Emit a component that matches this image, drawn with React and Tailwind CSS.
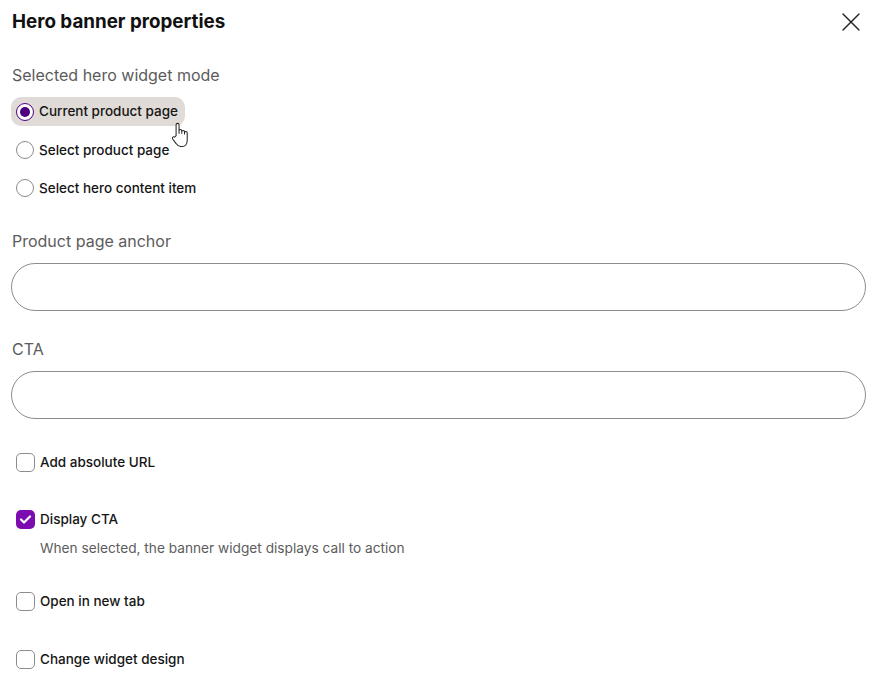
import { X } from 'lucide-react';

const font = "font-['Inter',sans-serif]";

function Radio({ label, checked, hovered }) {
  return (
    <div className="relative h-[38px] flex items-center">
      <div className={`flex items-center h-[29px] rounded-[10px] pl-[5px] pr-[7px] ${hovered ? 'bg-[#e0dbd7] mb-[1px]' : ''}`}>
        <span className={`w-[18px] h-[18px] rounded-full flex items-center justify-center border bg-white ${checked ? 'border-[#4d0080]' : 'border-[#8c8c8c]'}`}>
          {checked && <span className="w-[10px] h-[10px] rounded-full bg-[#4d0080]" />}
        </span>
        <span className="ml-[5px] text-[13.5px] font-medium text-[#151515]">{label}</span>
      </div>
      {hovered && (
        <svg className="absolute left-[159px] top-[29px]" width="19" height="25" viewBox="0 0 16 22" fill="white" stroke="#222" strokeWidth="0.9" strokeLinejoin="round">
          <path d="M5 12V2.5a1.3 1.3 0 0 1 2.6 0V10l0-2.2a1.2 1.2 0 0 1 2.4 0V10V8.6a1.2 1.2 0 0 1 2.4 0V10.5V9.6a1.2 1.2 0 0 1 2.4 0V16c0 3-1.6 5.5-4.5 5.5H9c-2 0-3-1-4-2.5L2 15c-.9-1.3.6-2.6 1.7-1.6z" />
        </svg>
      )}
    </div>
  );
}

function TextField({ label, className }) {
  return (
    <div className={className}>
      <div className="ml-[1px] text-[16px] leading-[18px] text-[#5c5c5c]">{label}</div>
      <input className="mt-[13px] block w-[855px] h-[48px] rounded-[24px] border border-[#8c8c8c] bg-white" />
    </div>
  );
}

function Check({ label, checked, hint, className }) {
  return (
    <div className={className}>
      <div className="flex items-center h-[20px]">
        {checked ? (
          <span className="w-[19px] h-[19px] rounded-[5px] bg-[#7c0bb0] flex items-center justify-center">
            <svg width="13" height="11" viewBox="0 0 13 11" fill="none" stroke="white" strokeWidth="2.2" strokeLinecap="round" strokeLinejoin="round">
              <path d="M2 5.5 5 8.5 11 2.5" />
            </svg>
          </span>
        ) : (
          <span className="w-[19px] h-[19px] rounded-[5px] border border-[#8c8c8c] bg-white" />
        )}
        <span className="ml-[5px] text-[13.5px] font-medium text-[#151515]">{label}</span>
      </div>
      {hint && <div className="ml-[24px] mt-[10px] text-[13.7px] leading-[18px] text-[#5c5c5c]">{hint}</div>}
    </div>
  );
}

export default function App() {
  return (
    <div className={`w-[875px] h-[682px] overflow-hidden bg-white pl-[11px] ${font}`}>
      <div className="flex items-center justify-between w-[855px] h-[44px]">
        <h2 className="ml-[1px] text-[18.8px] font-bold leading-[22px] text-[#111]">Hero banner properties</h2>
        <X className="w-[32px] h-[32px] text-[#222] mr-[-1px]" strokeWidth={1} />
      </div>
      <div className="ml-[1px] mt-[22px] text-[16px] leading-[18px] text-[#5c5c5c]">Selected hero widget mode</div>
      <div className="mt-[9px]">
        <Radio label="Current product page" checked hovered />
        <Radio label="Select product page" />
        <Radio label="Select hero content item" />
      </div>
      <TextField label="Product page anchor" className="mt-[25px]" />
      <TextField label="CTA" className="mt-[29px]" />
      <div className="ml-[5px]">
        <Check label="Add absolute URL" className="mt-[33px]" />
        <Check label="Display CTA" checked hint="When selected, the banner widget displays call to action" className="mt-[37px]" />
        <Check label="Open in new tab" className="mt-[34px]" />
        <Check label="Change widget design" className="mt-[38px]" />
      </div>
    </div>
  );
}
